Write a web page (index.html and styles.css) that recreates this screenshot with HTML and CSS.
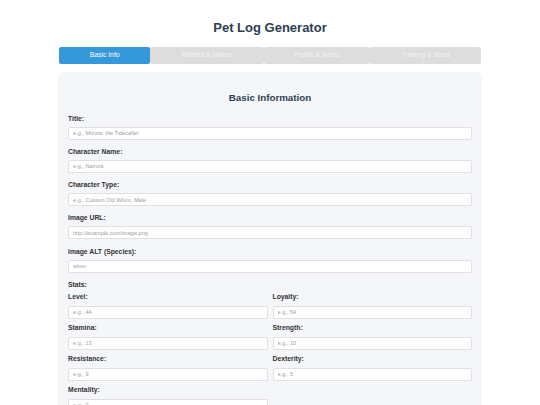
FILE: index.html
```html
<!DOCTYPE html>
<html lang="en">
<head>
<meta charset="utf-8">
<title>Pet Log Generator</title>
<link rel="stylesheet" href="styles.css">
</head>
<body>
<div class="container">
  <h1 class="page-title">Pet Log Generator</h1>
  <div class="tabs">
    <button class="tab active">Basic Info</button>
    <button class="tab">Abilities &amp; Moves</button>
    <button class="tab">Profile &amp; Notes</button>
    <button class="tab">Training &amp; Items</button>
  </div>
  <div class="card">
    <h2 class="card-title">Basic Information</h2>
    <div class="field">
      <label class="label">Title:</label>
      <input class="input" type="text" placeholder="e.g., Mizura, the Tidecaller">
    </div>
    <div class="field">
      <label class="label">Character Name:</label>
      <input class="input" type="text" placeholder="e.g., Nazura">
    </div>
    <div class="field">
      <label class="label">Character Type:</label>
      <input class="input" type="text" placeholder="e.g., Custom Old Wium, Male">
    </div>
    <div class="field">
      <label class="label">Image URL:</label>
      <input class="input" type="text" placeholder="http://example.com/image.png">
    </div>
    <div class="field">
      <label class="label">Image ALT (Species):</label>
      <input class="input" type="text" placeholder="wium">
    </div>
    <div class="stats-head">Stats:</div>
    <div class="stats">
      <div class="stat">
        <label class="label stat-label">Level:</label>
        <input class="input" type="text" placeholder="e.g., 44">
      </div>
      <div class="stat">
        <label class="label stat-label">Loyalty:</label>
        <input class="input" type="text" placeholder="e.g., 54">
      </div>
      <div class="stat">
        <label class="label stat-label">Stamina:</label>
        <input class="input" type="text" placeholder="e.g., 13">
      </div>
      <div class="stat">
        <label class="label stat-label">Strength:</label>
        <input class="input" type="text" placeholder="e.g., 10">
      </div>
      <div class="stat">
        <label class="label stat-label">Resistance:</label>
        <input class="input" type="text" placeholder="e.g., 9">
      </div>
      <div class="stat">
        <label class="label stat-label">Dexterity:</label>
        <input class="input" type="text" placeholder="e.g., 5">
      </div>
      <div class="stat">
        <label class="label stat-label">Mentality:</label>
        <input class="input" type="text" placeholder="e.g., 3">
      </div>
    </div>
  </div>
</div>
</body>
</html>
```
FILE: styles.css
```css
* { box-sizing: border-box; }
html, body {
  margin: 0;
  padding: 0;
  background: #ffffff;
  font-family: "Liberation Sans", Arial, sans-serif;
  color: #333333;
}
.container {
  width: 424px;
  margin: 0 auto;
  padding-top: 20px;
}
.page-title {
  margin: 0 0 12px;
  font-size: 13px;
  line-height: 15px;
  text-align: center;
  color: #2c3e50;
  font-weight: bold;
}
.tabs {
  display: flex;
  margin: 0 1px;
}
.tab {
  flex: 1 1 auto;
  height: 16.5px;
  padding: 0;
  border: none;
  border-radius: 2px;
  background: #dddddd;
  color: #f3f3f3;
  font-family: "Liberation Sans", Arial, sans-serif;
  font-size: 6.8px;
  line-height: 16.5px;
  cursor: pointer;
}
.tab.active {
  background: #3498db;
  color: #ffffff;
}
.card {
  margin-top: 8px;
  background: #f4f6f9;
  border-radius: 5px;
  padding: 20px 10px 20px;
  min-height: 400px;
}
.card-title {
  margin: 0 0 11px;
  font-size: 9.75px;
  line-height: 12px;
  text-align: center;
  color: #2c3e50;
  font-weight: bold;
}
.field {
  margin-bottom: 8.3px;
}
.label {
  display: block;
  font-size: 6.8px;
  line-height: 8px;
  font-weight: bold;
  color: #333333;
  margin-bottom: 4px;
}
.input {
  display: block;
  width: 100%;
  height: 13px;
  padding: 0 4px;
  border: 1px solid #e0e0e0;
  border-radius: 2px;
  background: #ffffff;
  font-family: "Liberation Sans", Arial, sans-serif;
  font-size: 5.6px;
  color: #333333;
  outline: none;
}
.input::placeholder {
  color: #a0a0a0;
}
.stats-head {
  font-size: 6.8px;
  line-height: 8px;
  font-weight: bold;
  color: #333333;
  margin-top: 1px;
  margin-bottom: 4.5px;
}
.stats {
  display: grid;
  grid-template-columns: 1fr 1fr;
  column-gap: 5px;
  row-gap: 5.5px;
}
.stat-label {
  margin-bottom: 4.5px;
}
```
